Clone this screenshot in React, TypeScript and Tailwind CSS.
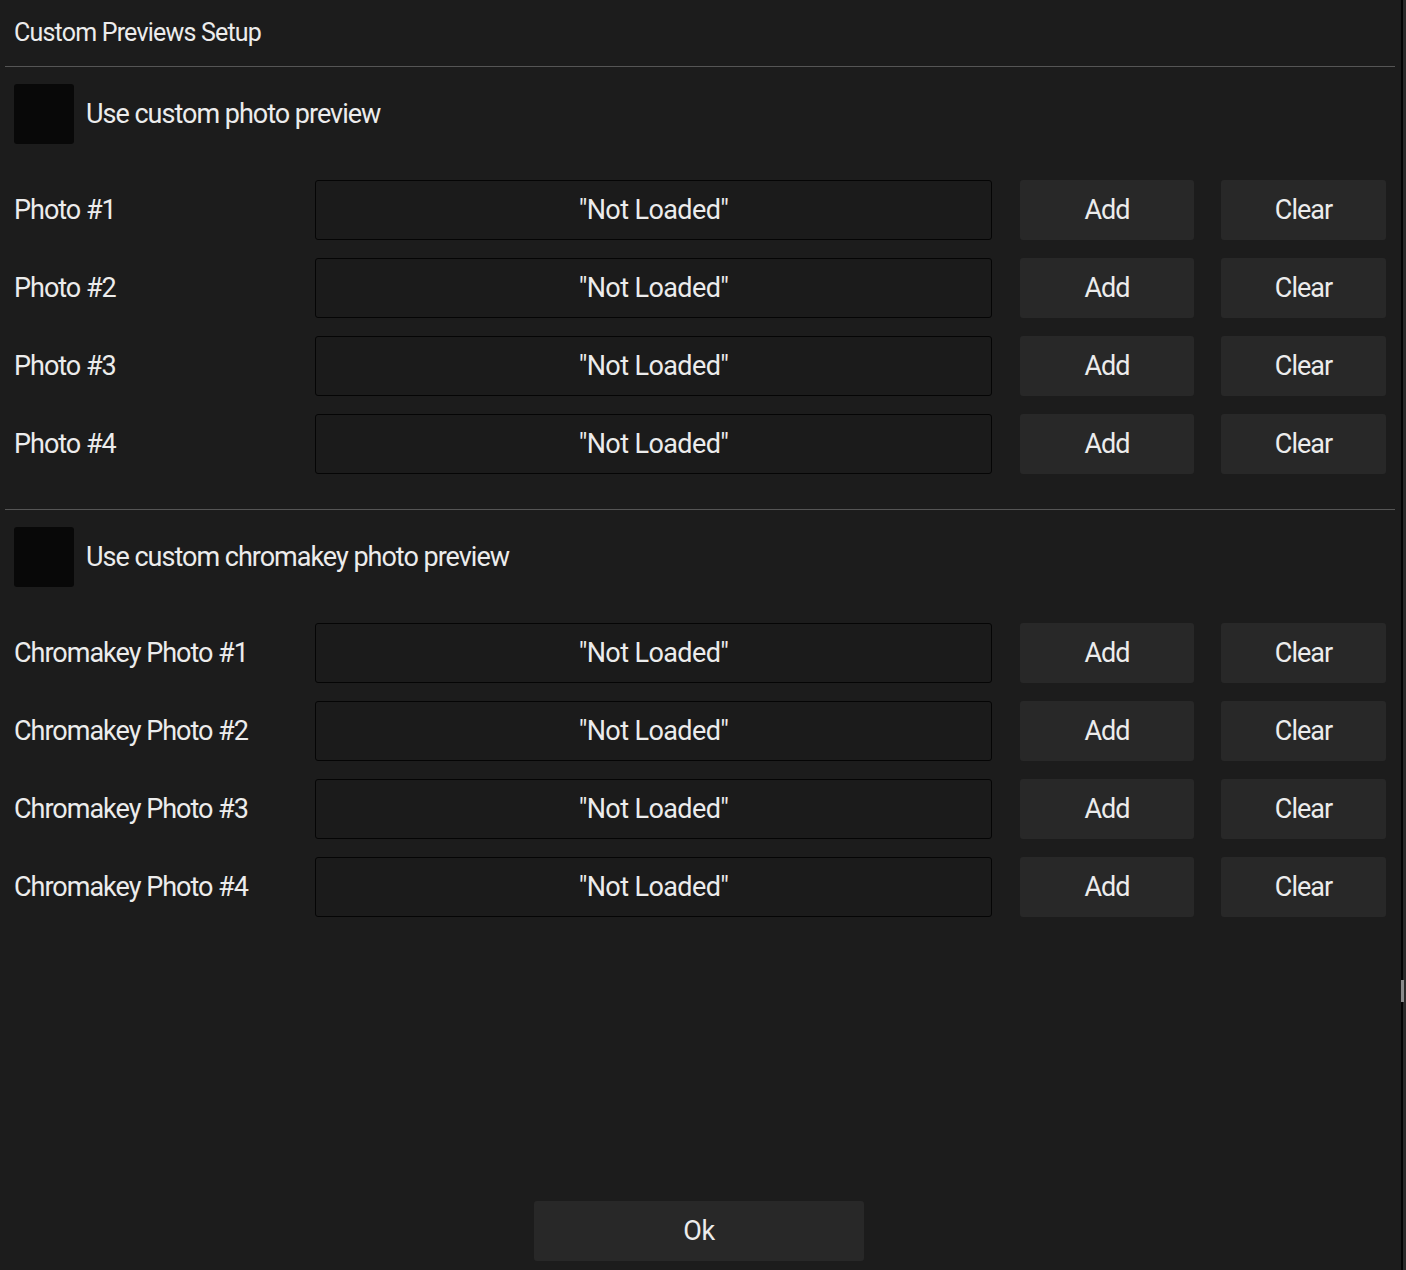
// Custom previews setup dialog
const font = { fontFamily: 'Roboto, "DejaVu Sans", sans-serif' };

type RowProps = { label: string };

function PhotoRow({ label }: RowProps) {
  return (
    <div className="flex h-[60px] items-center">
      <div className="w-[315px] pl-[14px] text-[27px] tracking-[-1px] text-[#ececec]">{label}</div>
      <div className="flex h-[60px] w-[677px] items-center justify-center rounded-[3px] border border-[#050505] bg-[#1b1b1b] text-[27px] tracking-[-0.6px] text-[#ececec]">
        "Not Loaded"
      </div>
      <button className="ml-[28px] flex h-[60px] w-[174px] items-center justify-center rounded-[3px] bg-[#282828] text-[27px] tracking-[-1px] text-[#ececec]">
        Add
      </button>
      <button className="ml-[27px] flex h-[60px] w-[165px] items-center justify-center rounded-[3px] bg-[#282828] text-[27px] tracking-[-1px] text-[#ececec]">
        Clear
      </button>
    </div>
  );
}

function Toggle({ label }: RowProps) {
  return (
    <div className="flex items-center pl-[14px]">
      <div className="h-[60px] w-[60px] rounded-[3px] bg-[#080808]" />
      <span className="ml-[12px] text-[27px] tracking-[-1px] text-[#ececec]">{label}</span>
    </div>
  );
}

export default function App() {
  const photos = ["Photo #1", "Photo #2", "Photo #3", "Photo #4"];
  const chroma = ["Chromakey Photo #1", "Chromakey Photo #2", "Chromakey Photo #3", "Chromakey Photo #4"];

  return (
    <div className="flex h-[1270px] w-[1406px] bg-[#2a2a2a]" style={font}>
      <div className="relative flex h-full w-[1403px] flex-col border-r-2 border-[#050505] bg-[#1c1c1c]">
        <div className="flex h-[66px] items-center pl-[14px] text-[25px] tracking-[-0.8px] text-[#ececec]">
          Custom Previews Setup
        </div>
        <div className="mx-[5px] h-px w-[1390px] bg-[#555555]" />

        <div className="mt-[17px]">
          <Toggle label="Use custom photo preview" />
        </div>
        <div className="mt-[36px] flex flex-col gap-[18px]">
          {photos.map((p) => (
            <PhotoRow key={p} label={p} />
          ))}
        </div>

        <div className="mx-[5px] mt-[35px] h-px w-[1390px] bg-[#555555]" />
        <div className="mt-[17px]">
          <Toggle label="Use custom chromakey photo preview" />
        </div>
        <div className="mt-[36px] flex flex-col gap-[18px]">
          {chroma.map((p) => (
            <PhotoRow key={p} label={p} />
          ))}
        </div>

        <div className="mt-auto mb-[9px] flex justify-center pr-[3px]">
          <button className="flex h-[60px] w-[330px] items-center justify-center rounded-[3px] bg-[#282828] text-[27px] tracking-[-0.5px] text-[#ececec]">
            Ok
          </button>
        </div>

        <div className="absolute right-[-3px] top-[980px] h-[22px] w-[3px] bg-[#8a8a8a]" />
      </div>
    </div>
  );
}
